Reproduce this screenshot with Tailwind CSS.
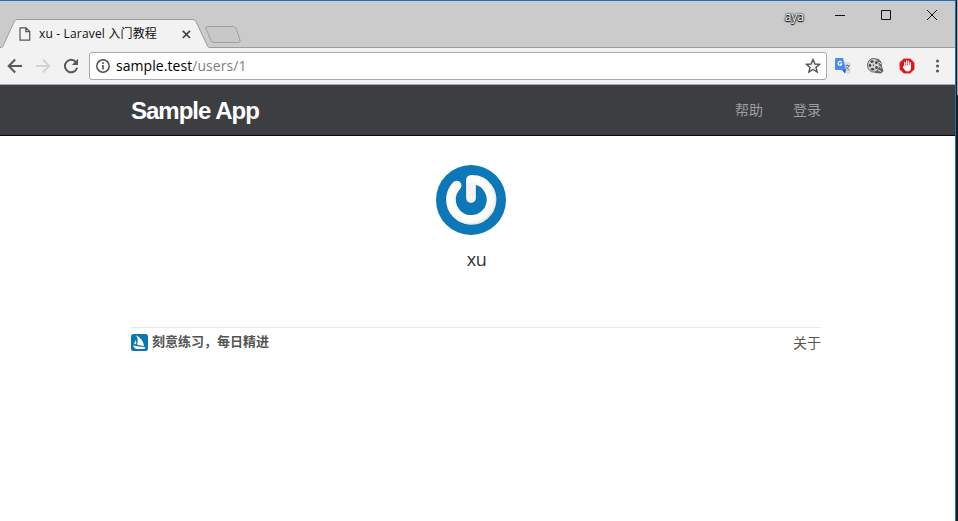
<!DOCTYPE html>
<html lang="zh">
<head>
<meta charset="utf-8">
<title>xu - Laravel 入门教程</title>
<script src="https://cdn.jsdelivr.net/npm/@tailwindcss/browser@4"></script>
</head>
<body class="flex overflow-hidden bg-[#1a1b1f] font-['Open_Sans','Noto_Sans_CJK_SC',sans-serif]">
<div class="flex h-[521px] w-[956px] shrink-0 flex-col border-t border-r border-[#1b6fb3] bg-white">
  <!-- Tab strip -->
  <header class="relative flex h-[47px] shrink-0 justify-between bg-[#cbcbcb]">
    <svg class="absolute inset-0" width="955" height="47" viewBox="0 1 955 47" fill="none">
      <path d="M206.500 26.500H233Q235 26.500 236 28L240 40Q240.500 42.500 238.500 42.500H214Q212 42.500 211 40.500L206 28.500Q205.500 26.500 206.500 26.500Z" fill="#c8c8c8" stroke="#a0a0a0"/>
      <path d="M0 47.500H2L14.500 21Q15.500 19.500 17 19.500H193Q195 19.500 196 21.500L207.500 46Q208 47.500 210 47.500H955V49H0Z" fill="#f2f2f2"/>
      <path d="M0 47.500H1.500Q2.500 47.500 3 46L14.500 21Q15.500 19.500 17 19.500H193Q195 19.500 196 21.500L207.500 46Q208 47.500 210 47.500H955" stroke="#9c9c9c"/>
    </svg>
    <div class="relative flex h-7 w-[208px] items-center self-end pb-0 pl-[19px]">
      <svg width="12" height="14" viewBox="0 0 12 14" fill="none" stroke="#555" stroke-width="1.200"><path d="M1 .8H7L10.700 4.500V13.200H1ZM6.800 1V4.700H10.500"/></svg>
      <span class="ml-2 w-[130px] whitespace-nowrap text-[12px] leading-4 tracking-[0.17px] text-[#111]">xu - Laravel 入门教程</span>
      <svg class="ml-[13px]" width="9" height="9" viewBox="0 0 9 9" stroke="#444" stroke-width="1.700"><path d="M.8.8 8 8M8 .8.8 8"/></svg>
    </div>
    <div class="flex h-[28px] items-center">
      <span class="relative mr-[31px] pt-[4px] text-[12px] leading-4 text-white [text-shadow:0_0_2px_#000,0_0_2px_#000,0_1px_1px_#000]">aya</span>
      <svg class="relative mr-[17px]" width="103" height="12" viewBox="0 0 103 12" fill="none" stroke="#111"><path d="M0 6.500H10M46.500 1.500H55.500V10.500H46.500ZM92 1 102 11M102 1 92 11"/></svg>
    </div>
  </header>

  <!-- Toolbar -->
  <div class="flex h-9 shrink-0 items-center bg-[#f2f2f2]">
    <svg class="ml-[7px]" width="16" height="16" viewBox="0 0 16 16" fill="none" stroke="#5a5a5a" stroke-width="2"><path d="M15 8H2M8.200 1.500 1.700 8 8.200 14.500"/></svg>
    <svg class="ml-3" width="16" height="16" viewBox="0 0 16 16" fill="none" stroke="#d4d4d4" stroke-width="2"><path d="M1 8H14M7.800 1.500 14.300 8 7.800 14.500"/></svg>
    <svg class="ml-3" width="16" height="16" viewBox="0 0 16 16"><path d="M13 4.200A6.200 6.200 0 1 0 14.100 9.800" fill="none" stroke="#5a5a5a" stroke-width="2"/><path d="M15 .8V7H8.800Z" fill="#5a5a5a"/></svg>
    <div class="ml-2.5 flex h-7 w-[738px] items-center rounded-[3px] border border-[#a9a9a9] bg-white">
      <svg class="ml-[6px]" width="14" height="14" viewBox="0 0 14 14" fill="none"><circle cx="7" cy="7" r="6.200" stroke="#505050" stroke-width="1.500"/><path d="M7 6V10.500M7 3.200V4.900" stroke="#505050" stroke-width="1.600"/></svg>
      <span class="ml-[6px] grow whitespace-nowrap text-[14px] leading-5 tracking-[0.06px] text-black">sample.test<span class="text-[#808080]">/users/1</span></span>
      <svg class="mr-[5px]" width="16" height="16" viewBox="0 0 16 16" fill="none" stroke="#505050" stroke-width="1.400"><path d="M8 1.500 9.900 6 14.600 6.300 11 9.400 12.100 14 8 11.500 3.900 14 5 9.400 1.400 6.300 6.100 6Z"/></svg>
    </div>
    <svg class="ml-2" width="16" height="16" viewBox="0 0 16 16"><path d="M7 4H15.500V15.500H10Z" fill="#dedede"/><path d="M1 0H8L11 12H1Q0 12 0 11V1Q0 0 1 0Z" fill="#4a8af4"/><path d="M7 12H11L10 15.500Z" fill="#3058c8"/><path d="M6.600 4.300A1.900 1.900 0 1 0 6.800 6H5" fill="none" stroke="#fff" stroke-width="1.200"/><path d="M10.500 7.500H15M12.500 6.500V7.500M14 7.500Q13 11 10.500 12M11.500 8.500Q12 11 14.500 12.500" fill="none" stroke="#72838b"/></svg>
    <svg class="ml-4" width="17" height="16" viewBox="0 0 17 16"><path d="M4 .5 11 .8Q15 3 15 8.500L16.500 13 14 15.500 8 15Z" fill="#666"/><ellipse cx="6.500" cy="7.300" rx="6" ry="6.800" fill="#d0d0d0" stroke="#666"/><g fill="#444"><ellipse cx="5" cy="3.500" rx="1.700" ry="1.200"/><ellipse cx="9.300" cy="4.500" rx="1.300" ry="1.600"/><ellipse cx="3" cy="7.300" rx="1.200" ry="1.600"/><ellipse cx="9.500" cy="9.500" rx="1.300" ry="1.600"/><ellipse cx="5.500" cy="11.300" rx="1.700" ry="1.200"/><circle cx="6.500" cy="7.300" r=".7"/></g><path d="M12 4 14 6M12 8 14.500 10M11 12 14 13.500" stroke="#ddd"/></svg>
    <svg class="ml-[15px]" width="16" height="16" viewBox="0 0 16 16"><path d="M4.800.5H11.200L15.500 4.800V11.200L11.200 15.500H4.800L.5 11.200V4.800Z" fill="#e11313" stroke="#f0a0a0" stroke-width=".6"/><path d="M5.700 9V4.500M7.600 8V2.800M9.500 8V3.200M11.300 9V5" stroke="#fff" stroke-width="1.300" stroke-linecap="round"/><path d="M5 7.500H12V10Q12 13.500 8.500 13.500 6.500 13.500 5 11L3.500 9 4.200 8.300Z" fill="#fff"/></svg>
    <svg class="ml-[20px]" width="5" height="14" viewBox="0 0 5 14" fill="#5a5a5a"><circle cx="2.500" cy="2" r="1.600"/><circle cx="2.500" cy="7" r="1.600"/><circle cx="2.500" cy="12" r="1.600"/></svg>
  </div>

  <!-- Site navigation -->
  <nav class="flex h-[52px] shrink-0 items-center border-t border-b border-t-[#aaa] border-b-[#080808] bg-[#3c3e42] pr-[134px] pl-[131px]">
    <a class="grow pt-[2px] font-['Liberation_Sans',Arial,sans-serif] text-[24px] leading-8 font-bold tracking-[-1px] whitespace-nowrap text-white">Sample App</a>
    <div class="flex gap-[30px] text-[14px] leading-5 text-[#9d9d9d]"><a>帮助</a><a>登录</a></div>
  </nav>

  <!-- Page -->
  <main class="mr-[134px] ml-[131px] flex flex-col">
    <section class="flex h-[191px] flex-col items-center pt-[29px]">
      <svg class="mr-[10px]" width="70" height="70" viewBox="0 0 70 70">
        <defs>
          <radialGradient id="ring" gradientUnits="userSpaceOnUse" cx="34" cy="33.500" r="27"><stop offset=".55" stop-color="#f4f4f4"/><stop offset=".7" stop-color="#fff"/><stop offset=".86" stop-color="#fcfcfc"/><stop offset="1" stop-color="#dedede"/></radialGradient>
        </defs>
        <circle cx="35" cy="35" r="35" fill="#0c77b9"/>
        <path d="M35 33V15Q46 14.500 51.500 22.500A20.300 20.300 0 1 1 20.600 20.600" fill="none" stroke="#0a659e" stroke-width="10.600" stroke-linecap="round" stroke-linejoin="round"/>
        <path d="M35 33V15Q46 14.500 51.500 22.500A20.300 20.300 0 1 1 20.600 20.600" fill="none" stroke="url(#ring)" stroke-width="9.800" stroke-linecap="round" stroke-linejoin="round"/>
      </svg>
      <h1 class="mt-[10px] pl-[1px] text-[18px] leading-7 tracking-[-0.4px] text-[#333]">xu</h1>
    </section>
    <footer class="flex justify-between border-t border-[#eaeaea] pt-[5px] text-[#555]">
      <div class="flex items-start">
        <svg class="mt-px" width="17" height="17" viewBox="0 0 17 17"><rect width="17" height="17" rx="2.500" fill="#0a77b2"/><path d="M5 1.200Q12 4.500 13 12.300L6 10.500Q8 6 5 1.200ZM4.800 6Q5.800 8.500 5 10.300L3 10ZM2 11.500 15 13.500 13 15H5Q3 13.500 2 11.500Z" fill="#fff"/></svg>
        <strong class="ml-[4px] text-[13px] leading-4 font-semibold whitespace-nowrap">刻意练习，每日精进</strong>
      </div>
      <a class="text-[14px] leading-5">关于</a>
    </footer>
  </main>
</div>
<!-- Slice of the desktop beside the window -->
<div class="flex w-[2px] flex-col"><div class="h-[95px] w-px self-end bg-[#a8a8a8]"></div></div>
</body>
</html>
